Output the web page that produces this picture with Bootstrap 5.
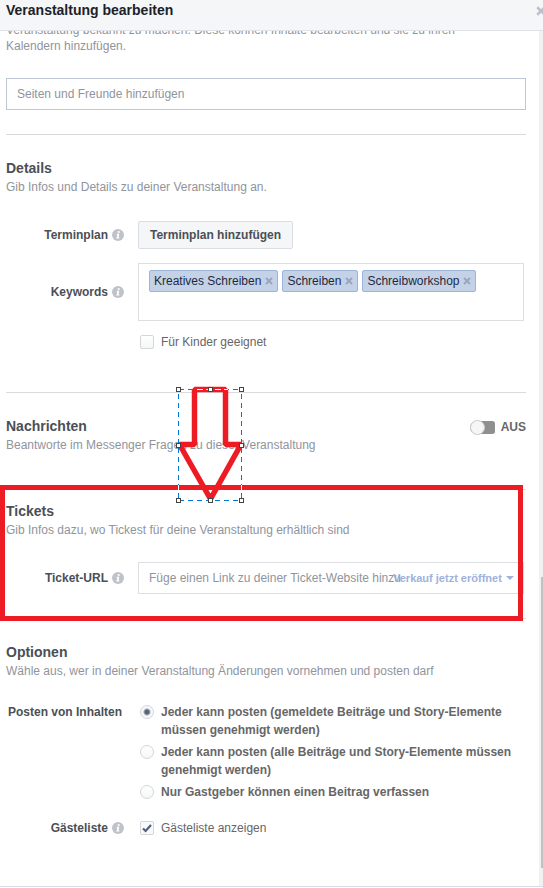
<!DOCTYPE html>
<html lang="de">
<head>
<meta charset="utf-8">
<meta name="viewport" content="width=device-width, initial-scale=1">
<title>Veranstaltung bearbeiten</title>
<link href="https://cdn.jsdelivr.net/npm/bootstrap@5.3.0/dist/css/bootstrap.min.css" rel="stylesheet">
<style>
  body { font-family: "Liberation Sans", Arial, sans-serif; font-size: 12px; line-height: 16px; color: #666; background: #fff; }
  .dialog-head { height: 31px; padding: 0 0 10px 6px; background: #f5f6f7; border-bottom: 1px solid #e0e2e5; z-index: 3; }
  .dialog-title { font-size: 14px; line-height: 18px; font-weight: 700; color: #1d2129; }
  .close-btn { margin-right: -3px; padding: 2px 0 0; line-height: 0; }
  .dialog-body { min-height: 0; border-bottom: 1px solid #d9dbe3; margin-bottom: 1px; }
  .scroll-area { padding: 0 13px 0 6px; min-width: 0; }
  .intro { margin-top: -9px; padding-bottom: 24px; }
  .intro p { max-width: 470px; margin-bottom: 24px; }
  .hint { color: #90949c; }
  .block { border-top: 1px solid #d8dadd; padding: 24px 0; }
  .block-title { font-size: 14px; line-height: 18px; font-weight: 700; color: #4b4f56; margin-bottom: 2px; }
  .block-details { padding-bottom: 41px; }
  .block-messages { padding-bottom: 36px; }
  .block-tickets { padding-top: 12px; }
  .fields { padding: 26px 2px 0 0; }
  .fields-options { padding-top: 24px; }
  .row-keywords { margin-top: 14px; }
  .row-kids { margin-top: 12px; }
  .row-guests { margin-top: 18px; }
  .field-name { width: 118px; margin-right: 14px; font-weight: 700; color: #4b4f56; text-align: right; }
  .field-name svg { margin-left: 4px; }
  .name-plain { padding-right: 2px; }
  .text-box { height: 32px; border: 1px solid #dddfe2; border-radius: 0; padding: 0 10px; font-size: 12px; line-height: 16px; color: #4b4f56; }
  .text-box::placeholder { color: #90949c; opacity: 1; }
  .box-blue { border-color: #bdc7d8; }
  .plan-btn { height: 28px; padding: 0 11px; border: 1px solid #dadde1; border-radius: 2px; background: #f5f6f7; color: #4b4f56; font-size: 12px; line-height: 16px; font-weight: 700; }
  .keyword-box { min-height: 58px; border: 1px solid #dddfe2; padding: 6px 10px; gap: 4px; }
  .keyword { height: 22px; padding: 0 4px; border: 1px solid #9cb4d8; border-radius: 2px; background: #c4d2e7; color: #1d2a3f; }
  .keyword button { margin-left: 4px; line-height: 0; color: #9aa7bd; }
  .tick, .dot { appearance: none; flex: none; width: 14px; height: 14px; margin: 2px 7px 0 2px; border: 1px solid #d3d6db; background: linear-gradient(#fff, #f5f6f7); }
  .tick { border-radius: 2px; }
  .tick:checked { background: #f8f9fb url("data:image/svg+xml,%3Csvg xmlns='http://www.w3.org/2000/svg' viewBox='0 0 12 12'%3E%3Cpath d='M2 6.5 4.6 9 10 3' fill='none' stroke='%23535f7c' stroke-width='2.2'/%3E%3C/svg%3E") center / 12px 12px no-repeat; }
  .dot { border-radius: 50%; }
  .dot:checked { background: radial-gradient(circle, #5a6478 2px, #f6f7f9 4px); }
  .choice { line-height: 18px; }
  .switch-input { appearance: none; position: relative; width: 25px; height: 13px; margin: 0 6px 0 0; border-radius: 7px 3px 3px 7px; background: #8f8f8f; }
  .switch-input::before { content: ""; position: absolute; left: 0; top: -1px; width: 15px; height: 15px; border: 1px solid #ccc; border-radius: 50%; background: #f5f6f7; }
  .url-box { padding-right: 121px; }
  .sale-select { position: absolute; right: 8px; top: 8px; height: 16px; padding: 0 14px 0 0; border: 0; appearance: none; font-size: 11px; line-height: 16px; font-weight: 700; color: #9db2dc; background: transparent url("data:image/svg+xml,%3Csvg xmlns='http://www.w3.org/2000/svg' viewBox='0 0 8 4'%3E%3Cpath d='M0 0h8L4 4z' fill='%239db2dc'/%3E%3C/svg%3E") right 2px center / 8px 4px no-repeat; }
  .marker-frame { position: absolute; left: -6px; right: 3px; top: -5px; bottom: -3px; border: 5px solid #ed1c24; pointer-events: none; z-index: 1; }
  .marker-arrow { position: absolute; left: 166px; top: -11px; pointer-events: none; z-index: 2; }
  .track { width: 4px; background: #f1f1f1; padding-left: 2px; }
  .track-before { flex: 546 0 0; }
  .track-thumb { flex: 291 0 0; background: #c1c1c1; }
  .track-after { flex: 18 0 0; }
</style>
</head>
<body>
<svg class="d-none" aria-hidden="true">
  <symbol id="info" viewBox="0 0 12 12">
    <circle cx="6" cy="6" r="6" fill="#bec3c9"/>
    <circle cx="6.7" cy="3" r="1.1" fill="#fff"/>
    <path d="M4.7 4.8h2.6L6.5 8.6h.9v1H4.3v-1h.5l.6-2.8h-.9z" fill="#fff"/>
  </symbol>
  <symbol id="cross" viewBox="0 0 8 8">
    <path d="M1 1l6 6M7 1L1 7" fill="none" stroke="currentColor" stroke-width="2"/>
  </symbol>
</svg>
<div class="d-flex flex-column vh-100 overflow-hidden">
  <header class="dialog-head d-flex flex-shrink-0 align-items-center justify-content-between position-relative overflow-hidden">
    <h1 class="dialog-title m-0">Veranstaltung bearbeiten</h1>
    <button type="button" class="close-btn border-0 bg-transparent" aria-label="Schließen"><svg width="10" height="10" color="#bcc0c8"><use href="#cross"/></svg></button>
  </header>
  <div class="dialog-body d-flex flex-grow-1">
    <main class="scroll-area flex-grow-1">
      <section class="intro">
        <p class="hint">Veranstaltung bekannt zu machen. Diese können Inhalte bearbeiten und sie zu ihren Kalendern hinzufügen.</p>
        <input class="text-box box-blue w-100 d-block" type="text" placeholder="Seiten und Freunde hinzufügen" aria-label="Seiten und Freunde hinzufügen">
      </section>

      <section class="block block-details">
        <h2 class="block-title">Details</h2>
        <p class="hint m-0">Gib Infos und Details zu deiner Veranstaltung an.</p>
        <div class="fields">
          <div class="d-flex align-items-center">
            <label class="field-name d-flex flex-shrink-0 align-items-center justify-content-end" for="plan">Terminplan<svg width="12" height="12"><use href="#info"/></svg></label>
            <button type="button" id="plan" class="plan-btn">Terminplan hinzufügen</button>
          </div>
          <div class="row-keywords d-flex align-items-center">
            <div class="field-name d-flex flex-shrink-0 align-items-center justify-content-end">Keywords<svg width="12" height="12"><use href="#info"/></svg></div>
            <div class="keyword-box d-flex flex-wrap align-items-start flex-grow-1">
              <span class="keyword d-flex align-items-center">Kreatives Schreiben<button type="button" class="border-0 bg-transparent p-0" aria-label="Kreatives Schreiben entfernen"><svg width="8" height="8"><use href="#cross"/></svg></button></span>
              <span class="keyword d-flex align-items-center">Schreiben<button type="button" class="border-0 bg-transparent p-0" aria-label="Schreiben entfernen"><svg width="8" height="8"><use href="#cross"/></svg></button></span>
              <span class="keyword d-flex align-items-center">Schreibworkshop<button type="button" class="border-0 bg-transparent p-0" aria-label="Schreibworkshop entfernen"><svg width="8" height="8"><use href="#cross"/></svg></button></span>
            </div>
          </div>
          <div class="row-kids d-flex">
            <div class="field-name flex-shrink-0"></div>
            <div class="choice d-flex"><input class="tick" type="checkbox" id="kids"><label for="kids">Für Kinder geeignet</label></div>
          </div>
        </div>
      </section>

      <section class="block block-messages position-relative">
        <div class="d-flex align-items-center justify-content-between">
          <h2 class="block-title">Nachrichten</h2>
          <label class="d-flex align-items-center fw-bold"><input class="switch-input" type="checkbox" role="switch">AUS</label>
        </div>
        <p class="hint m-0">Beantworte im Messenger Fragen zu dieser Veranstaltung</p>
        <svg class="marker-arrow" width="76" height="126" viewBox="172 382 76 126" fill="none" aria-hidden="true">
          <path d="M194.500 389.500H225.500V444.500H241L210.500 499L179.500 444.500H194.500Z" stroke="#ed1c24" stroke-width="5.500" stroke-linejoin="bevel"/>
          <path d="M178.500 389.500H241.500M178.500 500.500H241.500M178.500 394V500M241.500 394V500" stroke="#0078d7" stroke-dasharray="5 4" shape-rendering="crispEdges"/>
          <path d="M197 389.500H228M178.500 485V490M241.500 485V490" stroke="#fff" stroke-dasharray="6 3" shape-rendering="crispEdges"/>
          <g fill="#fff" stroke="#444">
            <rect x="176.500" y="387.500" width="4" height="4"/><rect x="208.500" y="387.500" width="4" height="4"/><rect x="239.500" y="387.500" width="4" height="4"/>
            <rect x="176.500" y="443.500" width="4" height="4"/><rect x="239.500" y="443.500" width="4" height="4"/>
            <rect x="176.500" y="498.500" width="4" height="4"/><rect x="208.500" y="498.500" width="4" height="4"/><rect x="239.500" y="498.500" width="4" height="4"/>
          </g>
        </svg>
      </section>

      <section class="block block-tickets position-relative">
        <h2 class="block-title">Tickets</h2>
        <p class="hint m-0">Gib Infos dazu, wo Tickest für deine Veranstaltung erhältlich sind</p>
        <div class="fields fields-options">
          <div class="d-flex align-items-center">
            <label class="field-name d-flex flex-shrink-0 align-items-center justify-content-end" for="url">Ticket-URL<svg width="12" height="12"><use href="#info"/></svg></label>
            <div class="position-relative flex-grow-1">
              <input class="text-box url-box w-100 d-block" type="url" id="url" placeholder="Füge einen Link zu deiner Ticket-Website hinzu">
              <select class="sale-select" aria-label="Verkaufsbeginn"><option>Verkauf jetzt eröffnet</option></select>
            </div>
          </div>
        </div>
        <div class="marker-frame"></div>
      </section>

      <section class="block">
        <h2 class="block-title">Optionen</h2>
        <p class="hint m-0">Wähle aus, wer in deiner Veranstaltung Änderungen vornehmen und posten darf</p>
        <div class="fields fields-options">
          <div class="d-flex" role="radiogroup" aria-labelledby="posting">
            <div class="field-name name-plain choice flex-shrink-0" id="posting">Posten von Inhalten</div>
            <div class="choice d-flex flex-column gap-1 fw-bold">
              <div class="d-flex"><input class="dot" type="radio" name="post" id="p1" checked><label for="p1">Jeder kann posten (gemeldete Beiträge und Story-Elemente müssen genehmigt werden)</label></div>
              <div class="d-flex"><input class="dot" type="radio" name="post" id="p2"><label for="p2">Jeder kann posten (alle Beiträge und Story-Elemente müssen genehmigt werden)</label></div>
              <div class="d-flex"><input class="dot" type="radio" name="post" id="p3"><label for="p3">Nur Gastgeber können einen Beitrag verfassen</label></div>
            </div>
          </div>
          <div class="row-guests d-flex align-items-center">
            <div class="field-name d-flex flex-shrink-0 align-items-center justify-content-end">Gästeliste<svg width="12" height="12"><use href="#info"/></svg></div>
            <div class="choice d-flex"><input class="tick" type="checkbox" id="guests" checked><label for="guests">Gästeliste anzeigen</label></div>
          </div>
        </div>
      </section>
    </main>
    <div class="track d-flex flex-column flex-shrink-0" aria-hidden="true">
      <div class="track-before"></div><div class="track-thumb"></div><div class="track-after"></div>
    </div>
  </div>
</div>
<script src="https://cdn.jsdelivr.net/npm/bootstrap@5.3.0/dist/js/bootstrap.bundle.min.js"></script>
</body>
</html>
